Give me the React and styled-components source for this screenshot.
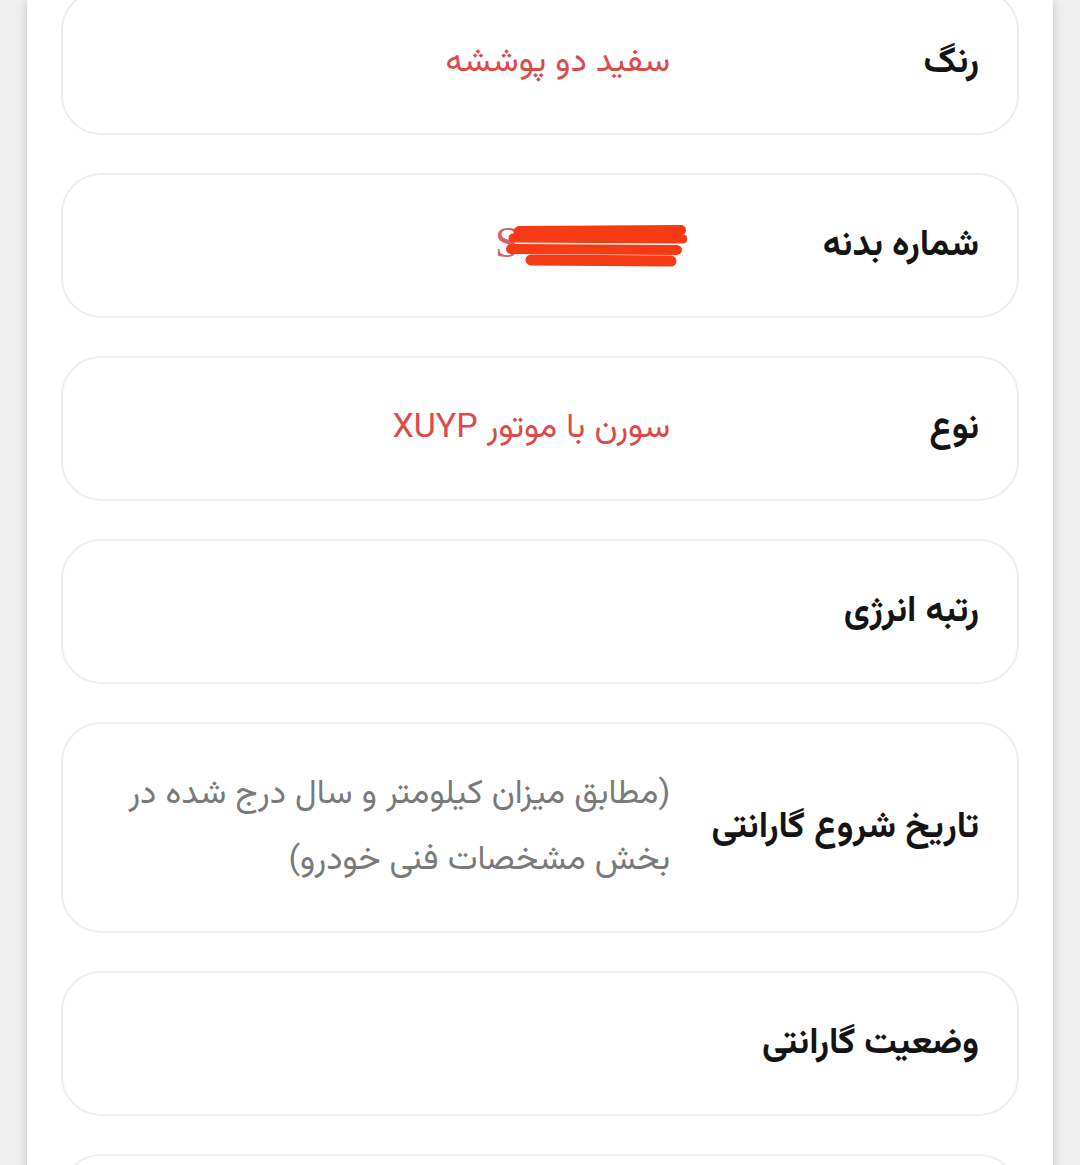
import React from "react";
import styled, { createGlobalStyle } from "styled-components";

const GlobalStyle = createGlobalStyle`
  html, body {
    margin: 0;
    padding: 0;
    background: #efefef;
    height: 1165px;
    overflow: hidden;
  }
  body {
    font-family: "Vazirmatn", "DejaVu Sans", "Noto Sans", sans-serif;
  }
`;

const Panel = styled.div`
  margin: 0 27px;
  min-height: 1165px;
  background: #ffffff;
  box-shadow: 0 0 10px rgba(0, 0, 0, 0.18);
  direction: rtl;
  padding: 0 34px;
  box-sizing: border-box;
  overflow: hidden;
`;

const List = styled.div`
  display: flex;
  flex-direction: column;
  gap: 38px;
  margin-top: -10px;
`;

const Card = styled.div`
  display: flex;
  align-items: center;
  min-height: ${(p) => (p.$tall ? "211px" : "145px")};
  box-sizing: border-box;
  border: 2px solid #eeeeee;
  border-radius: 40px;
  padding: 0 38px;
`;

const Label = styled.div`
  flex: 0 0 309px;
  font-size: 36px;
  font-weight: 700;
  color: #141414;
`;

const Value = styled.div`
  flex: 1;
  font-size: 34px;
  line-height: ${(p) => (p.$muted ? "66px" : "44px")};
  color: ${(p) => (p.$muted ? "#7a7a7a" : "#dc4a4a")};
`;

const Redacted = styled.span`
  position: relative;
  display: inline-block;
  width: 175px;
  height: 44px;
  direction: ltr;
  text-align: left;
  font-family: "Liberation Serif", serif;
  font-size: 44px;
  line-height: 44px;
  color: #d9606a;
`;

const Scribble = styled.svg`
  position: absolute;
  top: 3px;
  left: 10px;
  width: 182px;
  height: 46px;
`;

const rows = [
  { label: "رنگ", value: "سفید دو پوششه" },
  { label: "شماره بدنه", redacted: true },
  { label: "نوع", value: "سورن با موتور XUYP" },
  { label: "رتبه انرژی" },
  {
    label: "تاریخ شروع گارانتی",
    value: "(مطابق میزان کیلومتر و سال درج شده در بخش مشخصات فنی خودرو)",
    muted: true,
    tall: true,
  },
  { label: "وضعیت گارانتی" },
  { label: "" },
];

export default function App() {
  return (
    <>
      <GlobalStyle />
      <Panel>
        <List>
          {rows.map((r, i) => (
            <Card key={i} $tall={r.tall}>
              <Label>{r.label}</Label>
              <Value $muted={r.muted}>
                {r.redacted ? (
                  <Redacted>
                    S
                    <Scribble viewBox="0 0 182 46">
                      <g stroke="#f53a14" strokeLinecap="round" fill="none">
                        <path d="M14 7 L176 6" strokeWidth="10" />
                        <path d="M8 14 L178 15" strokeWidth="9" />
                        <path d="M6 25 L172 26" strokeWidth="10" />
                        <path d="M26 36 L166 37" strokeWidth="11" />
                      </g>
                    </Scribble>
                  </Redacted>
                ) : (
                  r.value
                )}
              </Value>
            </Card>
          ))}
        </List>
      </Panel>
    </>
  );
}
